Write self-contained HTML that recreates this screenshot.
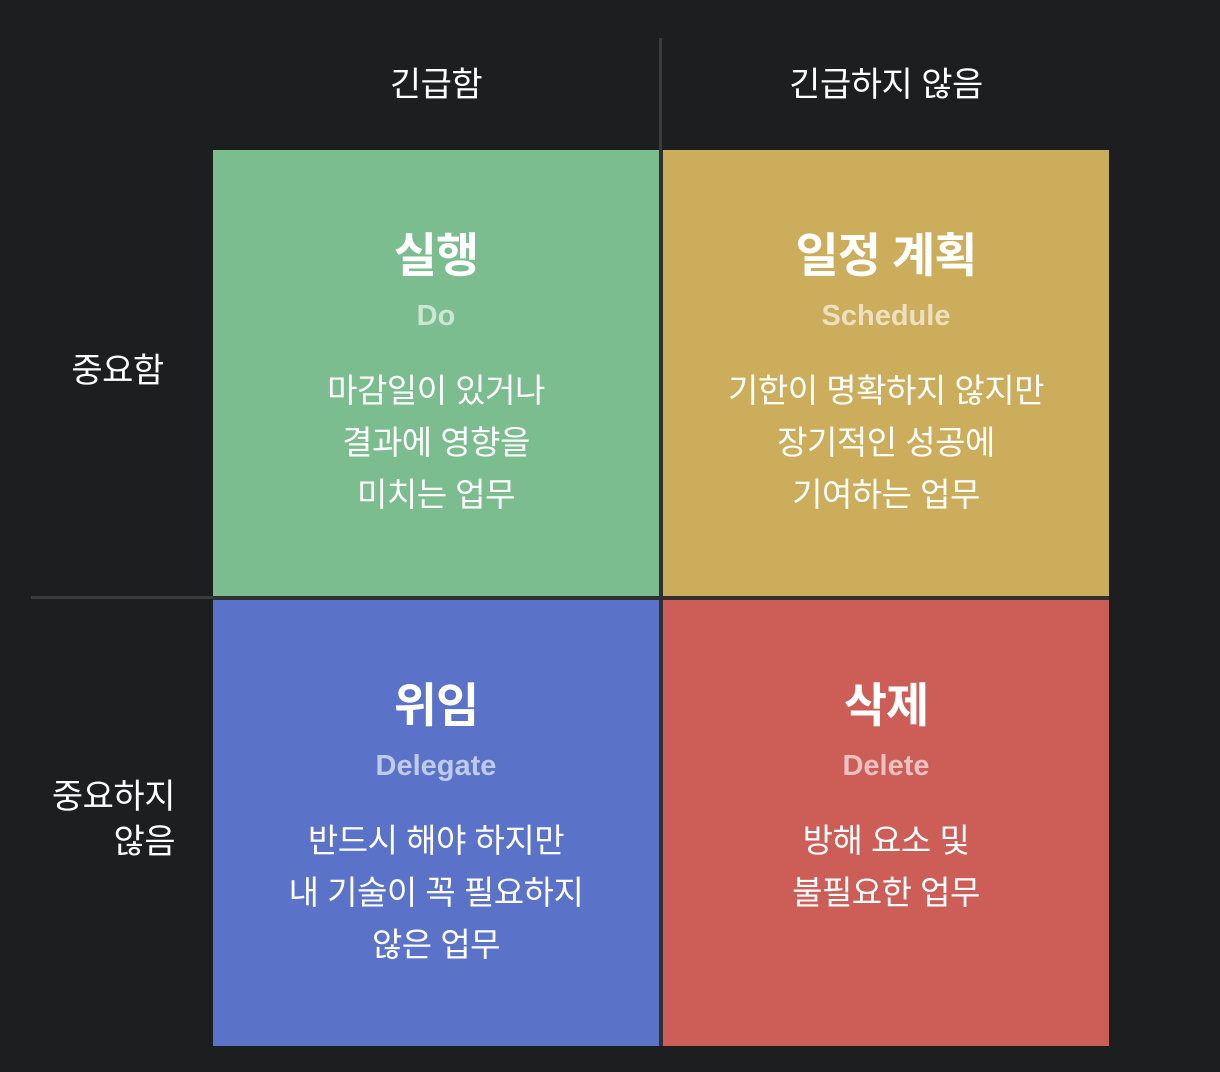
<!DOCTYPE html>
<html><head><meta charset="utf-8"><style>
html,body{margin:0;padding:0}
body{width:1220px;height:1072px;background:#1c1e20;position:relative;overflow:hidden;font-family:"Liberation Sans","Noto Sans CJK KR",sans-serif;color:#fff}
.a{position:absolute}
.q{position:absolute;width:446px;height:446px;text-align:center}
.t{position:absolute;left:0;right:0;font-weight:bold;font-size:47px;line-height:60px;letter-spacing:-1px}
.s{position:absolute;left:0;right:0;font-weight:bold;font-size:29px;line-height:30px;color:rgba(255,255,255,.62)}
.b{position:absolute;left:0;right:0;font-size:33px;line-height:52px;letter-spacing:-0.5px}
.h{position:absolute;font-size:34px;line-height:40px;text-align:center;letter-spacing:-0.5px}
</style></head><body>
<div class="a" style="left:659px;top:38px;width:3px;height:112px;background:#393b3d"></div>
<div class="a" style="left:31px;top:596px;width:182px;height:3px;background:#393b3d"></div>
<div class="a" style="left:213px;top:150px;width:896px;height:896px;background:#2e3032"></div>
<div class="h" style="left:213px;width:446px;top:65px">긴급함</div>
<div class="h" style="left:663px;width:446px;top:65px">긴급하지 않음</div>
<div class="h" style="left:40px;width:155px;top:351px">중요함</div>
<div class="h" style="left:40px;width:155px;top:775px;line-height:45px;text-align:right;padding-right:20px;box-sizing:border-box">중요하지<br>않음</div>

<div class="q" style="left:213px;top:150px;background:#7bbd8f">
<div class="t" style="top:76px">실행</div><div class="s" style="top:151px">Do</div>
<div class="b" style="top:215px">마감일이 있거나<br>결과에 영향을<br>미치는 업무</div></div>
<div class="q" style="left:663px;top:150px;background:#ccad5c">
<div class="t" style="top:76px">일정 계획</div><div class="s" style="top:151px">Schedule</div>
<div class="b" style="top:215px">기한이 명확하지 않지만<br>장기적인 성공에<br>기여하는 업무</div></div>
<div class="q" style="left:213px;top:600px;background:#5a73c8">
<div class="t" style="top:76px">위임</div><div class="s" style="top:151px">Delegate</div>
<div class="b" style="top:215px">반드시 해야 하지만<br>내 기술이 꼭 필요하지<br>않은 업무</div></div>
<div class="q" style="left:663px;top:600px;background:#cc5e57">
<div class="t" style="top:76px">삭제</div><div class="s" style="top:151px">Delete</div>
<div class="b" style="top:215px">방해 요소 및<br>불필요한 업무</div></div>
</body></html>
